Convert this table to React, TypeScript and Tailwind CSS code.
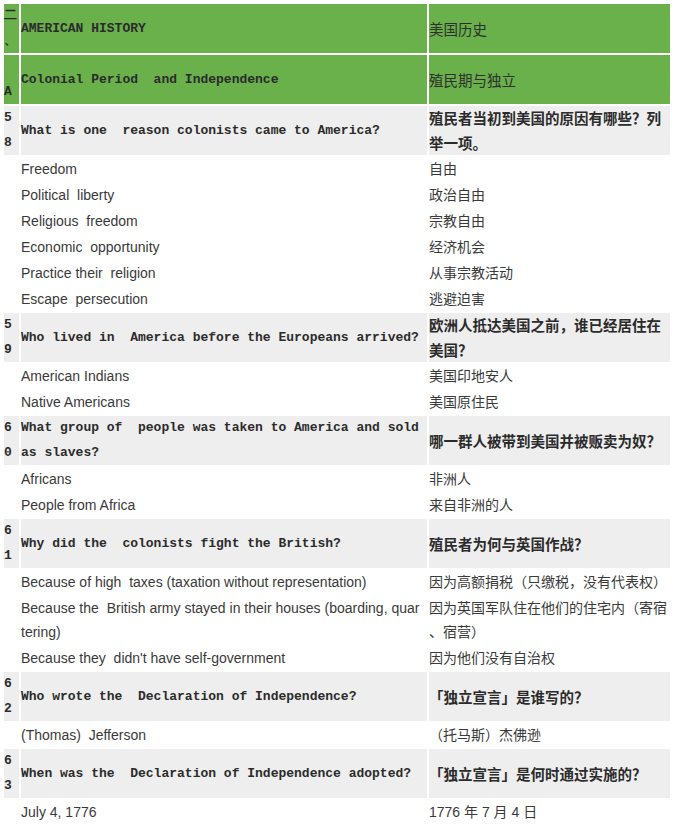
import React from 'react'

type Row =
  | { kind: 'head'; num: React.ReactNode; en: string; zh: string }
  | { kind: 'q'; num: [string, string]; en: string; zh: string }
  | { kind: 'a'; en: React.ReactNode; zh: React.ReactNode }

const sp = '\u00a0 '

const rows: Row[] = [
  { kind: 'head', num: <>二<br />、</>, en: 'AMERICAN HISTORY', zh: '美国历史' },
  { kind: 'head', num: <>{'\u00a0'}<br />A</>, en: `Colonial Period${sp}and Independence`, zh: '殖民期与独立' },
  { kind: 'q', num: ['5', '8'], en: `What is one${sp}reason colonists came to America?`, zh: '殖民者当初到美国的原因有哪些？列举一项。' },
  { kind: 'a', en: 'Freedom', zh: '自由' },
  { kind: 'a', en: `Political${sp}liberty`, zh: '政治自由' },
  { kind: 'a', en: `Religious${sp}freedom`, zh: '宗教自由' },
  { kind: 'a', en: `Economic${sp}opportunity`, zh: '经济机会' },
  { kind: 'a', en: `Practice their${sp}religion`, zh: '从事宗教活动' },
  { kind: 'a', en: `Escape${sp}persecution`, zh: '逃避迫害' },
  { kind: 'q', num: ['5', '9'], en: `Who lived in${sp}America before the Europeans arrived?`, zh: '欧洲人抵达美国之前，谁已经居住在美国？' },
  { kind: 'a', en: 'American Indians', zh: '美国印地安人' },
  { kind: 'a', en: 'Native Americans', zh: '美国原住民' },
  { kind: 'q', num: ['6', '0'], en: `What group of${sp}people was taken to America and sold as slaves?`, zh: '哪一群人被带到美国并被贩卖为奴？' },
  { kind: 'a', en: 'Africans', zh: '非洲人' },
  { kind: 'a', en: 'People from Africa', zh: '来自非洲的人' },
  { kind: 'q', num: ['6', '1'], en: `Why did the${sp}colonists fight the British?`, zh: '殖民者为何与英国作战？' },
  { kind: 'a', en: `Because of high${sp}taxes (taxation without representation)`, zh: '因为高额捐税（只缴税，没有代表权）' },
  {
    kind: 'a',
    en: <>Because the{sp}British army stayed in their houses (boarding, quar<br />tering)</>,
    zh: <>因为英国军队住在他们的住宅内（寄宿<br />、宿营）</>,
  },
  { kind: 'a', en: `Because they${sp}didn't have self-government`, zh: '因为他们没有自治权' },
  { kind: 'q', num: ['6', '2'], en: `Who wrote the${sp}Declaration of Independence?`, zh: '「独立宣言」是谁写的？' },
  { kind: 'a', en: `(Thomas)${sp}Jefferson`, zh: '（托马斯）杰佛逊' },
  { kind: 'q', num: ['6', '3'], en: `When was the${sp}Declaration of Independence adopted?`, zh: '「独立宣言」是何时通过实施的？' },
  { kind: 'a', en: 'July 4, 1776', zh: '1776 年 7 月 4 日' },
]

// bold monospace for the numbered questions, like the old SimSun table
const mono = "font-['Liberation_Mono',monospace] font-bold text-[13px] text-[#2b2b2b]"
const zhBold = "font-['Noto_Sans_CJK_SC',sans-serif] font-bold text-[14.5px] text-[#2b2b2b]"
const plain = "font-['Liberation_Sans','Noto_Sans_CJK_SC',sans-serif] text-[14px] text-[#3a3a3a] leading-[24px]"

export default function App() {
  return (
    <div className="w-[676px] min-h-[826px] bg-white p-[2px] overflow-hidden">
      <table className="w-[670px] table-fixed border-separate border-spacing-[2px]">
        <colgroup>
          <col className="w-[15px]" />
          <col className="w-[406px]" />
          <col className="w-[241px]" />
        </colgroup>
        <tbody>
          {rows.map((r, i) => {
            if (r.kind === 'head') {
              return (
                <tr key={i} className="bg-[#6ab04b]">
                  <td className={`${mono} p-0 align-middle leading-[24.6px]`}>{r.num}</td>
                  <td className={`${mono} p-0 align-middle leading-[24px]`}>{r.en}</td>
                  <td className="font-['Noto_Sans_CJK_SC',sans-serif] text-[14.5px] text-[#2f2f2f] p-0 align-middle leading-[24px]">{r.zh}</td>
                </tr>
              )
            }
            if (r.kind === 'q') {
              return (
                <tr key={i} className="bg-[#eeeeee]">
                  <td className={`${mono} p-0 align-middle leading-[24.5px]`}>{r.num[0]}<br />{r.num[1]}</td>
                  <td className={`${mono} p-0 align-middle leading-[24.5px]`}>{r.en}</td>
                  <td className={`${zhBold} p-0 align-middle leading-[24.5px]`}>{r.zh}</td>
                </tr>
              )
            }
            return (
              <tr key={i}>
                <td className="p-0" />
                <td className={`${plain} p-0 align-middle whitespace-nowrap overflow-hidden`}>{r.en}</td>
                <td className={`${plain} p-0 align-middle`}>{r.zh}</td>
              </tr>
            )
          })}
        </tbody>
      </table>
    </div>
  )
}
